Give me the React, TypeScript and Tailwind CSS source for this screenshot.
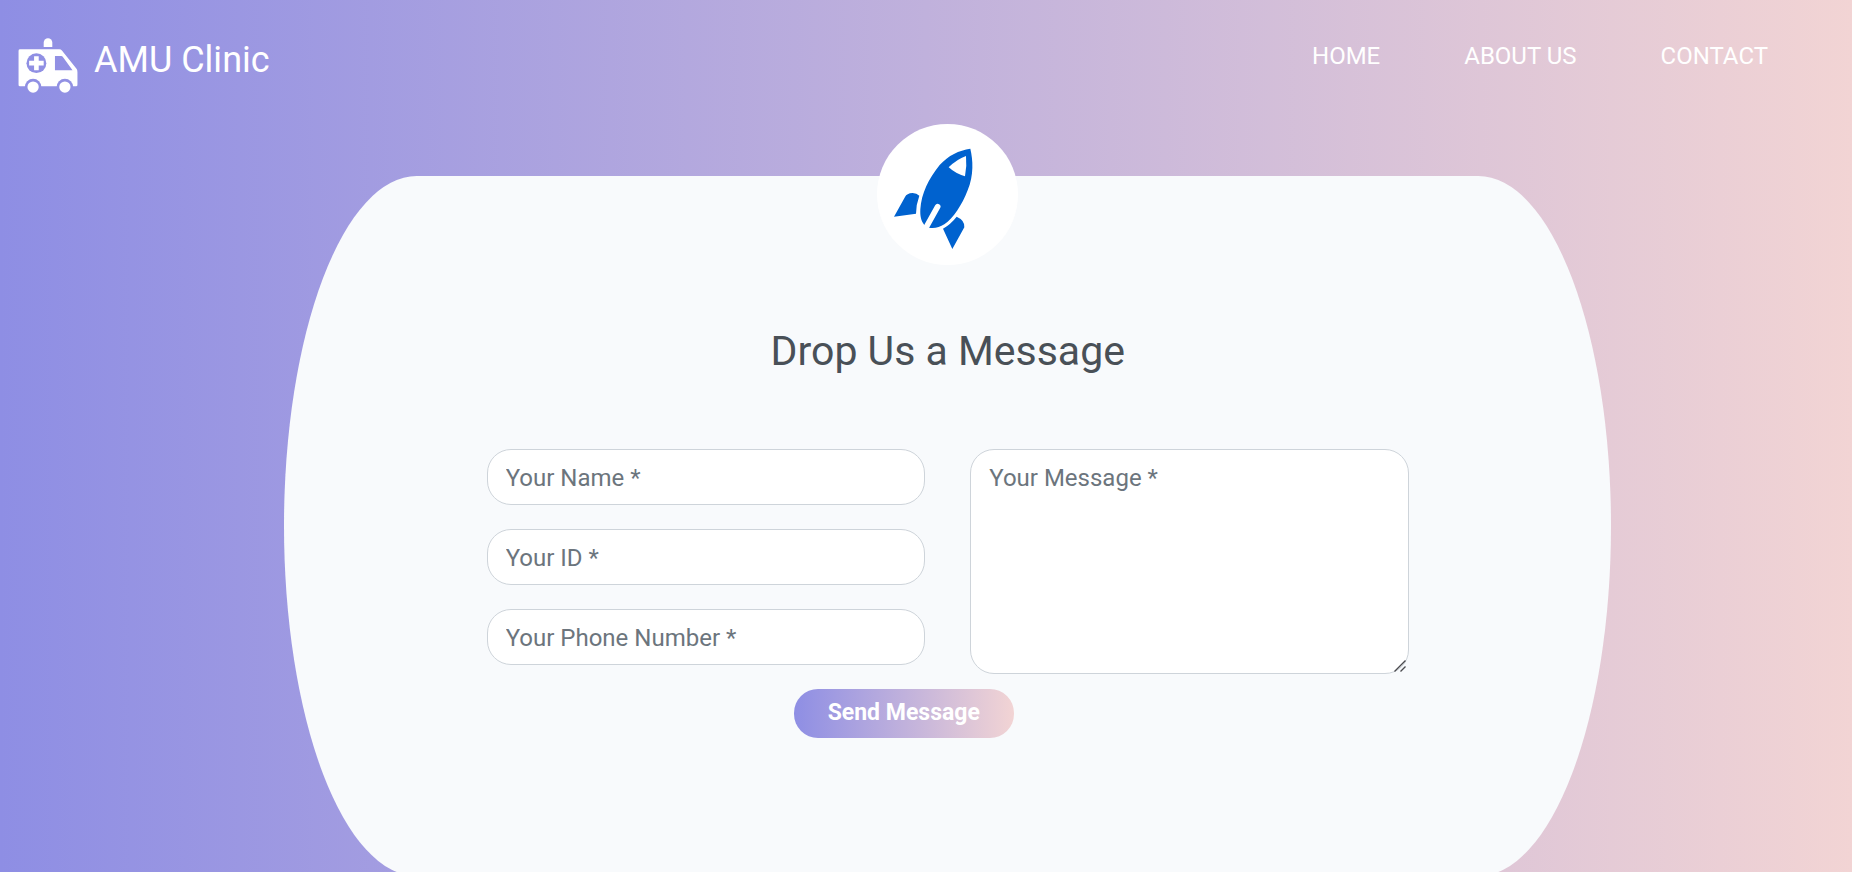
import React from "react";

function AmbulanceIcon() {
  return (
    <svg viewBox="54 53 180 166" className="h-[55px] w-[60px] shrink-0" aria-hidden="true">
      <defs>
        <mask id="ambulance-cutouts" maskUnits="userSpaceOnUse" x="54" y="53" width="180" height="166">
          <rect x="54" y="53" width="180" height="166" fill="#fff" />
          <circle cx="109" cy="129" r="30" fill="#000" />
          <path d="M165 107h19q3 0 5 3l29 40h-53z" fill="#000" />
          <circle cx="99" cy="201" r="25" fill="#000" />
          <circle cx="195" cy="201" r="25" fill="#000" />
        </mask>
      </defs>
      <g fill="#fff">
        <path d="M131 80V67a13 13 0 0 1 26 0v13z" />
        <path
          mask="url(#ambulance-cutouts)"
          d="M59 87h119q5 0 8 4l44 55q4 5 4 10v37q0 6-6 6H60q-6 0-6-6V92q0-5 5-5z"
        />
        <path d="M102 108h14v14h15v14h-15v14h-14v-14H87v-14h15z" />
        <circle cx="99" cy="201" r="17" />
        <circle cx="195" cy="201" r="17" />
      </g>
    </svg>
  );
}

function RocketBadge() {
  return (
    <svg viewBox="51 42 423 423" className="size-[141px] rounded-full bg-white" role="img" aria-label="Rocket">
      <g fill="#0062cf">
        <path d="M331 116C339 150 342 195 323 241C306 285 280 325 253 343C239 352 223 356 207 353L193 345C183 333 180 318 181 298C184 250 206 206 239 165C265 136 297 121 331 116Z" />
        <path d="M102 320L135 261Q140 250 158 249Q170 250 178 257Q168 284 168 311Z" />
        <path d="M290 320Q315 331 313 352L277 417L249 356Q272 343 290 320Z" />
      </g>
      <path d="M318 138Q321 168 315 199Q287 191 266 172Q290 148 318 138Z" fill="#fff" />
      <path d="M233 290L195 358" stroke="#fff" strokeWidth="17" strokeLinecap="round" />
    </svg>
  );
}

const links = [
  { label: "HOME", href: "#home" },
  { label: "ABOUT US", href: "#about" },
  { label: "CONTACT", href: "#contact" },
];

const fields = [
  { id: "name", type: "text", label: "Your Name *" },
  { id: "student-id", type: "text", label: "Your ID *" },
  { id: "phone", type: "tel", label: "Your Phone Number *" },
];

const control =
  "block w-full rounded-3xl border border-[#ced4da] bg-white px-[18px] text-2xl text-[#495057] placeholder:text-[#6c757d] placeholder:opacity-100";

export default function App() {
  return (
    <div className="h-screen overflow-hidden bg-[linear-gradient(to_right,#8e8ee4,#f2d4d4)] font-['Roboto',sans-serif]">
      <header className="flex h-[124px] items-start justify-between pl-[18px] pr-[84px] text-white">
        <a href="#home" className="flex items-start gap-4 pt-[38px]">
          <AmbulanceIcon />
          <span className="text-4xl leading-[44px]">AMU Clinic</span>
        </a>
        <nav className="flex gap-[84px] pt-[38px] text-2xl leading-9">
          {links.map((link) => (
            <a key={link.label} href={link.href}>
              {link.label}
            </a>
          ))}
        </nav>
      </header>

      <main className="ml-[15.35%] mr-[13%] pt-[52px]">
        <section className="flex h-[700px] flex-col rounded-[10%/50%] bg-[#f8fafc]">
          <div className="-mt-[52px] flex justify-center">
            <RocketBadge />
          </div>
          <form className="mx-auto w-[69.5%]">
            <h1 className="pt-[60px] text-center text-[41px] leading-[52px] text-[#495057]">Drop Us a Message</h1>
            <div className="mt-[72px] grid grid-cols-2 gap-[45px]">
              <div className="flex flex-col gap-6">
                {fields.map((field) => (
                  <input
                    key={field.id}
                    id={field.id}
                    type={field.type}
                    aria-label={field.label}
                    placeholder={field.label}
                    className={`${control} h-14 pt-[2px]`}
                  />
                ))}
              </div>
              <div className="relative self-start">
                <textarea
                  id="message"
                  aria-label="Your Message *"
                  placeholder="Your Message *"
                  className={`${control} h-[225px] resize-y py-[10px] leading-9 [&::-webkit-resizer]:bg-transparent`}
                />
                <svg
                  viewBox="0 0 12 12"
                  className="pointer-events-none absolute bottom-[2px] right-[3px] size-3"
                  stroke="#4b4b4f"
                  strokeWidth="1.4"
                  aria-hidden="true"
                >
                  <path d="M0.500 11.500L11.500 0.500M6.500 11.500L11.500 6.500" />
                </svg>
              </div>
            </div>
            <button
              type="button"
              className="ml-[33.3%] mt-[15px] block h-[49px] w-[220px] rounded-3xl bg-[linear-gradient(to_right,#8e8ee4,#f2d4d4)] text-[23px] font-bold text-white"
            >
              Send Message
            </button>
          </form>
        </section>
      </main>
    </div>
  );
}
